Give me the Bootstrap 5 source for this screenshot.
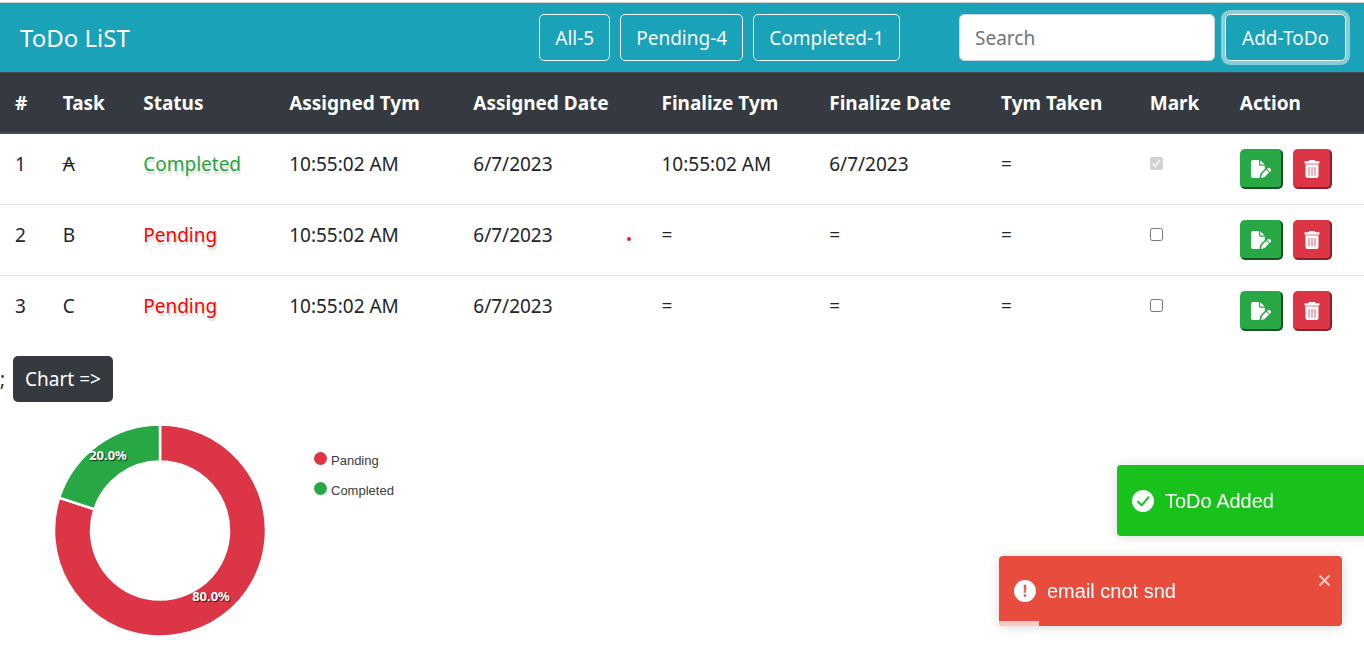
<!DOCTYPE html>
<html lang="en">
<head>
<meta charset="utf-8">
<meta name="viewport" content="width=device-width, initial-scale=1">
<title>ToDo LiST</title>
<link href="https://cdn.jsdelivr.net/npm/bootstrap@5.3.0/dist/css/bootstrap.min.css" rel="stylesheet">
<style>
  body {
    font-family: "Noto Sans", "Open Sans", sans-serif;
    font-size: 19px;
    line-height: 30px;
    color: #212529;
    border-top: 2px solid #fff;
  }
  .todo-nav {
    background: #19a2b8;
    border-top: 1px solid #cfcfcf;
    padding: 11px 18px 11px 20px;
  }
  .todo-nav .navbar-brand { font-size: 24px; line-height: 36px; padding: 0; margin: 0; color: #fff; }
  .todo-nav .btn, .todo-nav .form-control {
    font-size: 19px;
    line-height: 30px;
    height: 47px;
    padding: 6px 15px;
    border-radius: 5px;
  }
  .todo-nav .form-control { width: 256px; border-color: #ced4da; color: #495057; }
  .todo-nav .form-control::placeholder { color: #6c757d; }
  .gap-tools { gap: 10px; }
  .gap-search { gap: 59px; }
  .todo-nav .btn-add { padding: 6px 16px; box-shadow: 0 0 0 4px rgba(248, 249, 250, .5); }

  .todo-table { table-layout: fixed; min-width: 1240px; color: #212529; }
  .todo-table > :not(caption) > * > * { padding: 15px; border: 0; border-top: 1px solid #dee2e6; }
  .todo-table > thead > tr > th {
    background: #343a40;
    color: #fff;
    border-color: #454d55;
    border-bottom: 2px solid #454d55;
    padding-bottom: 14px;
    white-space: nowrap;
    box-shadow: none;
  }
  .todo-table tbody tr:first-child > * { border-top-color: #454d55; }
  .todo-table input[type=checkbox] { display: block; width: 13px; height: 13px; margin: 8px 0 0; }
  .state { text-shadow: 1px 3px 1px #ddd; }
  .state-done { color: #28a745; }
  .state-wait { color: #f00; }
  .pin { width: 4px; height: 4px; background: #e81c1c; margin-top: 8px; }
  .act { height: 40px; color: #fff; border: 2px solid; border-radius: 5px; padding: 0; display: flex; align-items: center; justify-content: center; }
  .act-edit { width: 43px; background: #28a745; border-color: #28a745 #145322 #145322 #28a745; }
  .act-del { width: 39px; background: #dc3545; border-color: #dc3545 #8a1f2b #8a1f2b #dc3545; }

  .chart-btn { background: #343a40; color: #fff; border: 0; border-radius: 5px; height: 46px; padding: 8px 12px; margin-left: 8px; }
  .chart-row { padding-top: 10px; }
  .donut { display: block; flex: none; }
  .donut text { font: bold 13px "Noto Sans", sans-serif; fill: #fff; text-shadow: 1px 1px 1px rgba(0, 0, 0, .7); }
  .legend-list { font: 13px/16px "Liberation Sans", Arial, sans-serif; color: #373d3f; padding: 51px 0 0 34px; }
  .legend-list li { display: flex; gap: 4px; margin-bottom: 14px; }
  .legend-dot { width: 13px; height: 13px; border-radius: 50%; margin-top: -1px; }
  .dot-wait { background: #dc3545; }
  .dot-done { background: #28a745; }

  .toasts { right: 22px; bottom: 23px; width: 343px; font-family: "Liberation Sans", Arial, sans-serif; font-size: 20px; }
  .note { height: 70px; border-radius: 4px; color: #fff; padding: 0 15px; gap: 11px; box-shadow: 0 1px 12px rgba(0, 0, 0, .15); overflow: hidden; }
  .note-ok { background: #19c11b; height: 71px; margin-bottom: 20px; transform: translateX(118px); }
  .note-err { background: #e84c3d; }
  .note-close { right: 11px; top: 18px; line-height: 0; padding: 0; border: 0; background: none; color: #f9cfcb; }
  .note-bar { left: 0; bottom: 0; height: 5px; background: #f8c9c5; }
</style>
</head>
<body>

<svg width="0" height="0" class="position-absolute" aria-hidden="true">
  <symbol id="i-edit" viewBox="0 0 20 18">
    <path fill="currentColor" d="M2 0h6v4.500a1.200 1.200 0 0 0 1.200 1.200h4.600v3.300l-4.300 4.400-1 3.600q0 .6.300 1H2a2 2 0 0 1-2-2V2a2 2 0 0 1 2-2z"/>
    <path fill="currentColor" d="M9.200.2l4.400 4.300H9.200zM16.800 8.300a1.500 1.500 0 0 1 2.200 0l.6.600a1.500 1.500 0 0 1 0 2.200l-.8.800-2.800-2.800zM15.300 9.800l2.800 2.800-4.400 4.300-3.700 1 1-3.800z"/>
  </symbol>
  <symbol id="i-trash" viewBox="0 0 16 18">
    <path fill="currentColor" d="M5.200 0h5.600l.7 1.200H15.500v2.200H.5V1.200h4zM1.500 4.500h13v11.500a2 2 0 0 1-2 2h-9a2 2 0 0 1-2-2z"/>
    <path fill="currentColor" opacity=".6" d="M1.500 3.400h13v1.100h-13z"/>
    <path stroke="#dc3545" stroke-width="1" opacity=".8" d="M5 7v8.500M8 7v8.500M11 7v8.500"/>
  </symbol>
</svg>

<nav class="todo-nav navbar">
  <a class="navbar-brand me-auto" href="#">ToDo LiST</a>
  <div class="d-flex flex-wrap gap-search">
    <div class="d-flex gap-tools">
      <button type="button" class="btn btn-outline-light">All-5</button>
      <button type="button" class="btn btn-outline-light">Pending-4</button>
      <button type="button" class="btn btn-outline-light">Completed-1</button>
    </div>
    <form class="d-flex gap-tools">
      <input class="form-control" type="search" placeholder="Search" aria-label="Search">
      <button type="button" class="btn btn-outline-light btn-add">Add-ToDo</button>
    </form>
  </div>
</nav>

<main>
  <div class="overflow-x-auto">
  <table class="table todo-table mb-0">
    <colgroup>
      <col style="width:3.5%"><col style="width:5.9%"><col style="width:10.7%"><col style="width:13.5%"><col style="width:13.8%"><col style="width:12.3%"><col style="width:12.6%"><col style="width:10.9%"><col style="width:6.6%"><col style="width:10.2%">
    </colgroup>
    <thead>
      <tr><th scope="col">#</th><th scope="col">Task</th><th scope="col">Status</th><th scope="col">Assigned Tym</th><th scope="col">Assigned Date</th><th scope="col">Finalize Tym</th><th scope="col">Finalize Date</th><th scope="col">Tym Taken</th><th scope="col">Mark</th><th scope="col">Action</th></tr>
    </thead>
    <tbody>
      <tr>
        <td>1</td><td><del>A</del></td><td><span class="state state-done">Completed</span></td><td>10:55:02 AM</td><td>6/7/2023</td><td>10:55:02 AM</td><td>6/7/2023</td><td>=</td>
        <td><input type="checkbox" aria-label="Mark A" checked disabled></td>
        <td><div class="d-flex gap-tools"><button type="button" class="act act-edit" aria-label="Edit A"><svg width="20" height="18"><use href="#i-edit"/></svg></button><button type="button" class="act act-del" aria-label="Delete A"><svg width="16" height="18"><use href="#i-trash"/></svg></button></div></td>
      </tr>
      <tr>
        <td>2</td><td>B</td><td><span class="state state-wait">Pending</span></td><td>10:55:02 AM</td><td><div class="d-flex justify-content-between align-items-center">6/7/2023<span class="pin rounded-circle"></span></div></td><td>=</td><td>=</td><td>=</td>
        <td><input type="checkbox" aria-label="Mark B"></td>
        <td><div class="d-flex gap-tools"><button type="button" class="act act-edit" aria-label="Edit B"><svg width="20" height="18"><use href="#i-edit"/></svg></button><button type="button" class="act act-del" aria-label="Delete B"><svg width="16" height="18"><use href="#i-trash"/></svg></button></div></td>
      </tr>
      <tr>
        <td>3</td><td>C</td><td><span class="state state-wait">Pending</span></td><td>10:55:02 AM</td><td>6/7/2023</td><td>=</td><td>=</td><td>=</td>
        <td><input type="checkbox" aria-label="Mark C"></td>
        <td><div class="d-flex gap-tools"><button type="button" class="act act-edit" aria-label="Edit C"><svg width="20" height="18"><use href="#i-edit"/></svg></button><button type="button" class="act act-del" aria-label="Delete C"><svg width="16" height="18"><use href="#i-trash"/></svg></button></div></td>
      </tr>
    </tbody>
  </table>
  </div>

  <div class="chart-row d-flex align-items-center">;<button type="button" class="chart-btn">Chart =&gt;</button></div>

  <div class="d-flex">
    <svg class="donut" width="280" height="240" viewBox="0 0 280 240" role="img" aria-label="Panding 80%, Completed 20%">
      <g stroke="#fff" stroke-width="2.500">
        <path fill="#dc3545" d="M160 22.500A106 106 0 1 1 59.200 95.700L94.400 107.200A69 69 0 1 0 160 59.500Z"/>
        <path fill="#28a745" d="M59.200 95.700A106 106 0 0 1 160 22.500V59.500A69 69 0 0 0 94.400 107.200Z"/>
      </g>
      <text x="108" y="58" text-anchor="middle">20.0%</text>
      <text x="211" y="199" text-anchor="middle">80.0%</text>
    </svg>
    <ul class="legend-list list-unstyled mb-0">
      <li><span class="legend-dot dot-wait"></span><span>Panding</span></li>
      <li><span class="legend-dot dot-done"></span><span>Completed</span></li>
    </ul>
  </div>
</main>

<div class="toasts position-fixed" role="status">
  <div class="note note-ok d-flex align-items-center">
    <svg width="22" height="22" viewBox="0 0 22 22" aria-hidden="true"><circle cx="11" cy="11" r="11" fill="#fff"/><path d="M5.500 11.200l4.200 4.100 7.300-8.600" fill="none" stroke="#19c11b" stroke-width="2"/></svg>
    <span>ToDo Added</span>
  </div>
  <div class="note note-err d-flex align-items-center position-relative">
    <svg width="22" height="22" viewBox="0 0 22 22" aria-hidden="true"><circle cx="11" cy="11" r="11" fill="#fff"/><path d="M10 5h2l-.3 7.500h-1.400z" fill="#e84c3d" stroke="#e84c3d" stroke-width=".5"/><circle cx="11" cy="15.500" r="1.300" fill="#e84c3d"/></svg>
    <span>email cnot snd</span>
    <button type="button" class="note-close position-absolute" aria-label="Close"><svg width="13" height="13" viewBox="0 0 13 13"><path d="M1.500 1.500l10 10M11.500 1.500l-10 10" stroke="currentColor" stroke-width="2"/></svg></button>
    <span class="note-bar position-absolute" style="width:40px"></span>
  </div>
</div>

<script src="https://cdn.jsdelivr.net/npm/bootstrap@5.3.0/dist/js/bootstrap.bundle.min.js"></script>
</body>
</html>
